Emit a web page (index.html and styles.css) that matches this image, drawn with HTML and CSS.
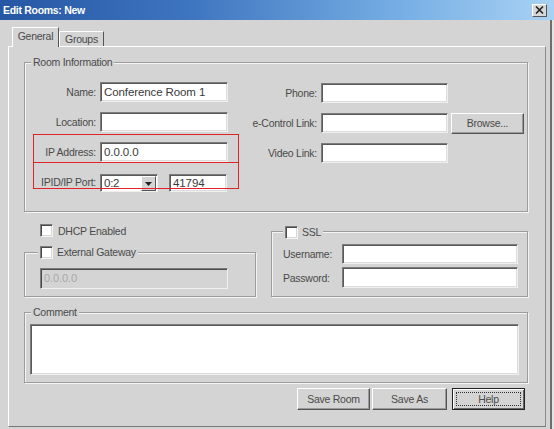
FILE: index.html
```html
<!DOCTYPE html>
<html>
<head>
<meta charset="utf-8">
<link rel="stylesheet" href="styles.css">
</head>
<body>
<div class="window">
  <div class="titlebar">
    <span class="title">Edit Rooms: New</span>
    <span class="close"><svg width="9" height="8" viewBox="0 0 9 8"><path d="M1 0.5 L8 7.5 M8 0.5 L1 7.5" stroke="#222" stroke-width="1.6"/></svg></span>
  </div>
  <div class="tabs">
    <div class="tab active">General</div>
    <div class="tab">Groups</div>
  </div>
  <div class="panel">
    <div class="group room">
      <span class="legend">Room Information</span>
      <div class="room-cols">
        <div class="form left">
          <label>Name:</label><div class="input">Conference Room 1</div>
          <label>Location:</label><div class="input"></div>
          <label>IP Address:</label><div class="input">0.0.0.0</div>
          <label>IPID/IP Port:</label>
          <div class="pair">
            <div class="select"><span class="sel-text">0:2</span><span class="sel-btn"><svg width="7" height="4" viewBox="0 0 7 4"><path d="M0 0 H7 L3.5 4 Z" fill="#222"/></svg></span></div>
            <div class="input port">41794</div>
          </div>
        </div>
        <div class="form right">
          <label>Phone:</label><div class="input"></div><span></span>
          <label>e-Control Link:</label><div class="input"></div><div class="btn browse">Browse...</div>
          <label>Video Link:</label><div class="input"></div><span></span>
        </div>
      </div>
      <div class="mark mark1"></div>
      <div class="mark mark2"></div>
    </div>
    <div class="mid">
      <div class="midleft">
        <div class="check dhcp"><span class="box"></span><span>DHCP Enabled</span></div>
        <div class="group gw">
          <span class="legend check"><span class="box"></span><span>External Gateway</span></span>
          <div class="input disabled">0.0.0.0</div>
        </div>
      </div>
      <div class="group ssl">
        <span class="legend check"><span class="box"></span><span>SSL</span></span>
        <div class="form sslform">
          <label>Username:</label><div class="input"></div>
          <label>Password:</label><div class="input tall"></div>
        </div>
      </div>
    </div>
    <div class="group comment">
      <span class="legend">Comment</span>
      <div class="input textarea"></div>
    </div>
    <div class="buttons">
      <div class="btn">Save Room</div>
      <div class="btn saveas">Save As</div>
      <div class="btn help"><span class="focus">Help</span></div>
    </div>
  </div>
</div>
</body>
</html>
```
FILE: styles.css
```css
* { box-sizing: border-box; }
html, body { margin: 0; padding: 0; background: #d4d4d4; }
body {
  font-family: "Liberation Sans", Arial, sans-serif;
  font-size: 10.5px;
  letter-spacing: -0.25px;
  color: #4a4a4a;
}
.window {
  width: 554px;
  height: 429px;
  background: #d4d4d4;
  box-shadow: inset -2px 0 0 #e4e4e4, inset -4px 0 0 #6e6e6e;
  overflow: hidden;
}
.titlebar {
  height: 20px;
  background: linear-gradient(90deg, #2656a4 0%, #3f76c0 35%, #76aee4 72%, #a8d2f4 100%);
  display: flex;
  align-items: center;
  justify-content: space-between;
  padding: 0 7px 0 3px;
}
.title {
  color: #fff;
  font-weight: bold;
  font-size: 10.5px;
  letter-spacing: -0.3px;
}
.close {
  width: 15px;
  height: 13px;
  background: #d8d8d8;
  border: 1px solid;
  border-color: #fff #555 #555 #fff;
  display: flex;
  align-items: center;
  justify-content: center;
}
.tabs {
  display: flex;
  align-items: flex-end;
  margin: 7px 0 0 12px;
  height: 19px;
  position: relative;
  z-index: 2;
}
.tab {
  height: 15px;
  width: 45px;
  border-top: 1px solid #fff;
  border-left: 1px solid #fff;
  border-right: 1px solid #555;
  background: #d4d4d4;
  text-align: center;
  line-height: 15px;
}
.tab.active {
  height: 20px;
  width: 47px;
  margin-bottom: -1px;
  line-height: 17px;
}
.panel {
  margin-left: 8px;
  width: 538px;
  height: 381px;
  border-top: 1px solid #fff;
  border-left: 1px solid #fff;
  border-right: 1px solid #8a8a8a;
  border-bottom: 1px solid #777;
  position: relative;
}
.group {
  position: relative;
  border: 1px solid #9c9c9c;
  box-shadow: inset 1px 1px 0 #f4f4f4, 1px 1px 0 #f4f4f4;
}
.legend {
  position: absolute;
  top: -7px;
  left: 6px;
  background: #d4d4d4;
  padding: 0 2px;
  line-height: 13px;
}
.room {
  margin: 15px 0 0 15px;
  width: 504px;
  height: 150px;
  padding-top: 19px;
}
.room-cols { display: flex; align-items: flex-start; }
.form { display: grid; align-items: center; }
.form label { text-align: right; white-space: nowrap; }
.left {
  grid-template-columns: 71px 128px;
  column-gap: 4px;
  grid-auto-rows: 20px;
  row-gap: 10px;
}
.right {
  margin: 1px 0 0 22px;
  grid-template-columns: 68px 127px 73px;
  column-gap: 3px;
  grid-auto-rows: 20px;
  row-gap: 10px;
}
.right label { margin-right: 1px; }
.input {
  height: 20px;
  background: #fff;
  border: 1px solid;
  border-color: #7c7c7c #f0f0f0 #f0f0f0 #7c7c7c;
  box-shadow: inset 1px 1px 0 #5a5a5a, inset -1px -1px 0 #dcdcdc;
  font-size: 11.5px;
  letter-spacing: -0.1px;
  line-height: 18px;
  padding-left: 3px;
  color: #3a3a3a;
  white-space: nowrap;
  overflow: hidden;
}
.pair { display: flex; gap: 11px; height: 18px; align-self: end; }
.select {
  width: 58px;
  height: 18px;
  background: #fff;
  border: 1px solid;
  border-color: #7c7c7c #f0f0f0 #f0f0f0 #7c7c7c;
  box-shadow: inset 1px 1px 0 #5a5a5a;
  display: flex;
  justify-content: space-between;
  font-size: 11.5px;
  color: #3a3a3a;
  line-height: 16px;
  padding: 0 1px 0 3px;
}
.sel-btn {
  width: 15px;
  height: 15px;
  margin-top: 1px;
  background: #d4d4d4;
  border: 1px solid;
  border-color: #fff #555 #555 #fff;
  display: flex;
  align-items: center;
  justify-content: center;
}
.input.port { width: 58px; height: 18px; line-height: 16px; }
.btn {
  height: 21px;
  background: #d4d4d4;
  border: 1px solid;
  border-color: #fff #555 #555 #fff;
  box-shadow: inset -1px -1px 0 #9a9a9a;
  display: flex;
  align-items: center;
  justify-content: center;
  font-size: 10.5px;
}
.mark {
  position: absolute;
  left: 8px;
  width: 206px;
  border: 1.5px solid #e4222a;
}
.mark1 { top: 71px; height: 29px; }
.mark2 { top: 99px; height: 27px; }
.mid { display: flex; align-items: flex-start; }
.midleft { margin-left: 15px; width: 232px; }
.check { display: flex; align-items: center; gap: 5px; }
.box {
  width: 13px;
  height: 13px;
  background: #fff;
  border: 1px solid;
  border-color: #7c7c7c #f4f4f4 #f4f4f4 #7c7c7c;
  box-shadow: inset 1px 1px 0 #4a4a4a, inset -1px -1px 0 #d8d8d8;
  flex: none;
}
.dhcp { margin: 12px 0 0 16px; height: 13px; }
.gw {
  margin-top: 15px;
  width: 232px;
  height: 45px;
  padding: 15px 0 0 15px;
}
.legend.check { left: 13px; top: -7px; gap: 4px; display: flex; }
.input.disabled {
  width: 188px;
  height: 21px;
  background: #d4d4d4;
  color: #a8a8a8;
  font-size: 11px;
  box-shadow: inset 1px 1px 0 #4a4a4a;
}
.ssl {
  margin: 19px 0 0 15px;
  width: 257px;
  height: 66px;
  padding: 12px 0 0 11px;
}
.ssl .legend.check { left: 11px; top: -6px; }
.sslform {
  grid-template-columns: 59px 176px;
  grid-template-rows: 20px 21px;
  row-gap: 3px;
}
.sslform label { text-align: left; }
.input.tall { height: 21px; }
.comment {
  margin: 15px 0 0 15px;
  width: 504px;
  height: 71px;
  padding: 11px 0 0 5px;
}
.textarea { width: 489px; height: 51px; }
.buttons {
  display: flex;
  justify-content: flex-end;
  gap: 2px;
  margin-top: 5px;
  padding-right: 20px;
}
.buttons .btn { width: 73px; height: 22px; }
.buttons .saveas { width: 75px; margin-right: 3px; }
.btn.help {
  border: 1px solid #222;
  box-shadow: inset 1px 1px 0 #fff, inset -1px -1px 0 #666;
  padding: 3px;
}
.focus {
  width: 100%;
  height: 100%;
  border: 1px dotted #333;
  display: flex;
  align-items: center;
  justify-content: center;
}
```
